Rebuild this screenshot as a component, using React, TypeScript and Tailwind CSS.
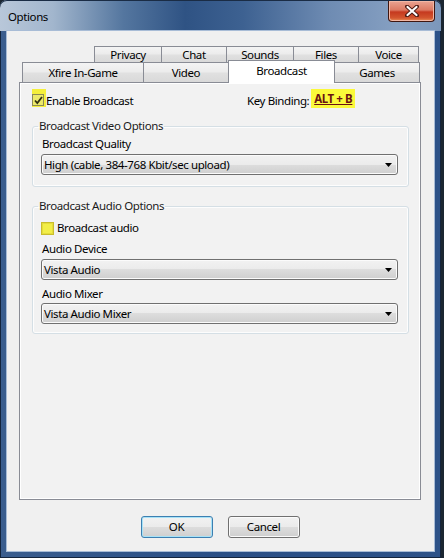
import React from "react";

type TabDef = { label: string; w: string; selected?: boolean };

const backRow: TabDef[] = [
  { label: "Privacy", w: "w-[68px]" },
  { label: "Chat", w: "w-[66px]" },
  { label: "Sounds", w: "w-[68px]" },
  { label: "Files", w: "w-[66px]" },
  { label: "Voice", w: "w-[61px]" },
];

const frontRow: TabDef[] = [
  { label: "Xfire In-Game", w: "w-[122px]" },
  { label: "Video", w: "w-[86px]" },
  { label: "Broadcast", w: "w-[107px]", selected: true },
  { label: "Games", w: "w-[86px]" },
];

const tabBase =
  "flex items-center justify-center border border-b-0 border-[#898c95] text-[11.5px] leading-none";
const tabIdle =
  "bg-[linear-gradient(#f4f4f4_0%,#ececec_45%,#e0e0e0_55%,#d9d9d9_100%)]";

function TabRow({ tabs, height }: { tabs: TabDef[]; height: string }) {
  return (
    <div className={`flex items-end ${height}`}>
      {tabs.map((t, i) => (
        <div
          key={t.label}
          className={`${tabBase} ${t.w} ${i > 0 ? "-ml-px" : ""} ${
            t.selected
              ? "relative z-10 h-[23px] -mb-px bg-white pb-[2px]"
              : `${height} ${tabIdle}`
          }`}
        >
          {t.label}
        </div>
      ))}
    </div>
  );
}

function Combo({ value }: { value: string }) {
  return (
    <div className="flex h-[21px] items-center justify-between rounded-[3px] border border-[#707070] bg-[linear-gradient(#f2f2f2_0%,#ebebeb_50%,#dddddd_50%,#cfcfcf_100%)] pl-[2px] pr-[5px] text-[11.5px] leading-none shadow-[inset_0_0_0_1px_#fbfbfb]">
      <span>{value}</span>
      <svg width="7" height="4" viewBox="0 0 7 4">
        <path d="M0 0h7L3.5 4z" fill="#000" />
      </svg>
    </div>
  );
}

function Group({ title, children, className }: { title: string; children: React.ReactNode; className: string }) {
  return (
    <fieldset
      className={`w-[377px] rounded-[3px] border border-[#d5dfe5] pl-[8px] pr-[10px] shadow-[inset_0_0_0_1px_#fdfdfd] ${className}`}
    >
      <legend className="-ml-[3px] px-px text-[11.5px] leading-[16px] text-[#1b1b1b]">{title}</legend>
      {children}
    </fieldset>
  );
}

export default function App() {
  return (
    <div className="h-[558px] w-[444px] bg-[#1b2631] font-['Noto_Sans',sans-serif] tracking-[-0.4px] text-black">
      <div className="flex h-[558px] w-[441px] flex-col rounded-t-[7px] bg-[linear-gradient(90deg,#3a5d8e,#2a4f86_50%,#2d5288)] shadow-[inset_0_0_0_1px_#13243d]">
        {/* title bar */}
        <div className="flex h-[31px] items-start rounded-t-[7px] bg-[linear-gradient(90deg,#b8c7d9_0%,#a2b6cd_12%,#54769f_28%,#2f5384_42%,#3d6191_55%,#6f8cb3_75%,#86a0c2_90%,#7c97bb_100%)] shadow-[inset_0_1px_0_#1a2c45]">
          <span className="ml-[8px] mt-[9px] text-[11.5px] leading-[16px]">Options</span>
          <div className="flex-1" />
          <button className="mr-[6px] mt-px flex h-[21px] w-[47px] items-center justify-center rounded-b-[4px] border border-t-0 border-[#3f1610] bg-[linear-gradient(#eaa392_0%,#dc7a63_45%,#c5391f_55%,#d3562f_85%,#e9925a_100%)] shadow-[inset_0_0_0_1px_#f1b7a5]">
            <svg width="14" height="12" viewBox="0 0 14 12">
              <path d="M2 1.5l10 9M12 1.5l-10 9" stroke="#4b1a12" strokeWidth="4" strokeLinecap="round" />
              <path d="M2.5 2l9 8M11.5 2l-9 8" stroke="#ffffff" strokeWidth="2.2" strokeLinecap="round" />
            </svg>
          </button>
        </div>

        {/* client area */}
        <div className="mx-[7px] flex h-[520px] flex-col bg-[#f0f0f0] pt-[15px] shadow-[0_0_0_1px_#a8bcd6]">
          <div className="ml-[12px] flex w-[402px] flex-col">
            <div className="pl-[75px]">
              <TabRow tabs={backRow} height="h-[16px]" />
            </div>
            <div className="pl-[3px]">
              <TabRow tabs={frontRow} height="h-[20px]" />
            </div>

            <div className="flex h-[418px] flex-col border border-[#898c95] bg-[#f2f2f2] pl-[12px] pt-[10px] shadow-[inset_0_0_0_1px_#ffffff]">
              <div className="flex h-[16px] items-center whitespace-nowrap text-[11.5px] leading-[16px]">
                <div className="flex w-[215px] shrink-0 items-center">
                  <span className="-mt-[4px] flex h-[18px] w-[14px] items-end self-start bg-[#f4ef3c] pb-px">
                    <span className="flex h-[12px] w-[12px] items-center justify-center border border-[#8b8a55] bg-[#ecea6a]">
                      <svg width="9" height="9" viewBox="0 0 9 9">
                        <path d="M1 4.5l2.3 2.6L8 1" fill="none" stroke="#2f2f12" strokeWidth="1.8" />
                      </svg>
                    </span>
                  </span>
                  <span>Enable Broadcast</span>
                </div>
                <span className="shrink-0">Key Binding:</span>
                <span className="-mt-[4px] ml-[2px] flex h-[19px] w-[44px] shrink-0 items-center justify-center self-start bg-[#fbf93a] font-bold text-[#6b1212] underline">
                  ALT + B
                </span>
              </div>

              <Group title="Broadcast Video Options" className="mt-[9px] pb-[11px]">
                <div className="ml-px mt-[2px] text-[11.5px] leading-[16px]">Broadcast Quality</div>
                <div className="mt-[2px]">
                  <Combo value="High (cable, 384-768 Kbit/sec upload)" />
                </div>
              </Group>

              <Group title="Broadcast Audio Options" className="mt-[11px] pb-[9px]">
                <div className="mt-[6px] flex h-[16px] items-center text-[11.5px] leading-[16px]">
                  <span className="h-[13px] w-[13px] border border-[#c9bd2c] bg-[#f2ee47] shadow-[inset_0_0_0_1px_#e5dd3a]" />
                  <span className="ml-[3px]">Broadcast audio</span>
                </div>
                <div className="ml-px mt-[5px] text-[11.5px] leading-[16px]">Audio Device</div>
                <div className="mt-[2px]">
                  <Combo value="Vista Audio" />
                </div>
                <div className="ml-px mt-[6px] text-[11.5px] leading-[16px]">Audio Mixer</div>
                <div className="mt-px">
                  <Combo value="Vista Audio Mixer" />
                </div>
              </Group>
            </div>
          </div>

          <div className="mt-[16px] flex justify-center gap-[15px] pr-[1px]">
            <button className="h-[22px] w-[72px] rounded-[3px] border border-[#3c7fb1] bg-[linear-gradient(#f2f2f2_0%,#ebebeb_50%,#dddddd_50%,#cfcfcf_100%)] text-[11.5px] leading-none shadow-[inset_0_0_0_1px_#a7e2f7]">
              OK
            </button>
            <button className="h-[22px] w-[72px] rounded-[3px] border border-[#707070] bg-[linear-gradient(#f2f2f2_0%,#ebebeb_50%,#dddddd_50%,#cfcfcf_100%)] text-[11.5px] leading-none shadow-[inset_0_0_0_1px_#fbfbfb]">
              Cancel
            </button>
          </div>
        </div>
      </div>
    </div>
  );
}
